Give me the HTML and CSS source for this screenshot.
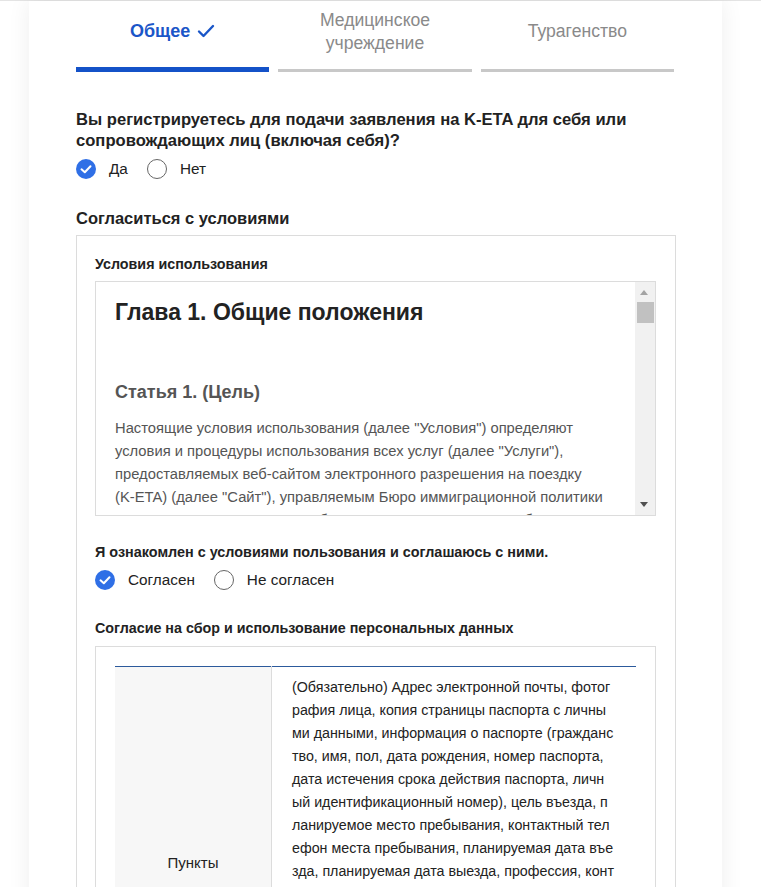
FILE: index.html
```html
<!DOCTYPE html>
<html lang="ru">
<head>
<meta charset="utf-8">
<title>K-ETA</title>
<link rel="stylesheet" href="styles.css">
</head>
<body>
<div class="topline"></div>
<main class="card">
  <nav class="tabs">
    <div class="tab active">
      <div class="tab-label">Общее
        <svg class="tab-check" width="18" height="14" viewBox="0 0 18 14"><polyline points="2,7.5 6.5,12 16,2" fill="none" stroke="#1a56c8" stroke-width="2.4" stroke-linecap="round" stroke-linejoin="round"/></svg>
      </div>
      <div class="tab-bar"></div>
    </div>
    <div class="tab">
      <div class="tab-label">Медицинское<br>учреждение</div>
      <div class="tab-bar"></div>
    </div>
    <div class="tab">
      <div class="tab-label">Турагенство</div>
      <div class="tab-bar"></div>
    </div>
  </nav>

  <section class="question">
    <h2 class="q-title">Вы регистрируетесь для подачи заявления на K-ETA для себя или сопровождающих лиц (включая себя)?</h2>
    <div class="radios">
      <label class="radio"><span class="dot checked"><svg width="20" height="20" viewBox="0 0 20 20"><polyline points="5.5,10.3 8.8,13.3 14.5,7.2" fill="none" stroke="#fff" stroke-width="2" stroke-linecap="round" stroke-linejoin="round"/></svg></span>Да</label>
      <label class="radio"><span class="dot"></span>Нет</label>
    </div>
  </section>

  <h2 class="section-title">Согласиться с условиями</h2>
  <div class="terms-box">
    <h3 class="sub-title">Условия использования</h3>
    <div class="scroll-wrap">
      <div class="scroll">
        <h4 class="chapter">Глава 1. Общие положения</h4>
        <h5 class="article">Статья 1. (Цель)</h5>
        <p class="para">Настоящие условия использования (далее "Условия") определяют условия и процедуры использования всех услуг (далее "Услуги"), предоставляемых веб-сайтом электронного разрешения на поездку <span class="nowrap">(K-ETA)</span> (далее "Сайт"), управляемым Бюро иммиграционной политики Министерства юстиции Республики Корея, а также права, обязанности и ответственность Сайта и пользователей.</p>
        <h5 class="article">Статья 2. (Определения)</h5>
        <p class="para">Термины, используемые в настоящих Условиях, определяются следующим образом. "Пользователь" означает лицо, которое получает доступ к Сайту и пользуется Услугами в соответствии с настоящими Условиями.</p>
        <h5 class="article">Статья 3. (Публикация и изменение Условий)</h5>
        <p class="para">Сайт размещает содержание настоящих Условий на начальном экране, чтобы пользователи могли легко с ними ознакомиться. Сайт может изменять настоящие Условия в пределах, не противоречащих действующему законодательству.</p>
      </div>
      <div class="scrollbar" aria-hidden="true">
        <span class="sb-arrow up"></span>
        <span class="sb-thumb"></span>
        <span class="sb-arrow down"></span>
      </div>
    </div>
    <p class="agree-q">Я ознакомлен с условиями пользования и соглашаюсь с ними.</p>
    <div class="radios">
      <label class="radio"><span class="dot checked"><svg width="20" height="20" viewBox="0 0 20 20"><polyline points="5.5,10.3 8.8,13.3 14.5,7.2" fill="none" stroke="#fff" stroke-width="2" stroke-linecap="round" stroke-linejoin="round"/></svg></span>Согласен</label>
      <label class="radio"><span class="dot"></span>Не согласен</label>
    </div>

    <h3 class="sub-title privacy">Согласие на сбор и использование персональных данных</h3>
    <div class="consent-box">
      <table class="consent-table">
        <tr>
          <th>Пункты</th>
          <td>(Обязательно) Адрес электронной почты, фотог<br>рафия лица, копия страницы паспорта с личны<br>ми данными, информация о паспорте (гражданс<br>тво, имя, пол, дата рождения, номер паспорта,<br>дата истечения срока действия паспорта, личн<br>ый идентификационный номер), цель въезда, п<br>ланируемое место пребывания, контактный тел<br>ефон места пребывания, планируемая дата въе<br>зда, планируемая дата выезда, профессия, конт<br>актные данные, опыт посещения Кореи, наличи<br>е двойного гражданства, сведения о семье, сведения о сопровождающих лицах, сведения о судимости, сведения о заболеваниях, сведения о предыдущих отказах во въезде в Республику Корея, сведения о посещении других стран, сведения о месте работы и занимаемой должности</td>
        </tr>
      </table>
    </div>
  </div>
</main>
</body>
</html>
```

FILE: styles.css
```css
html, body {
  margin: 0;
  padding: 0;
  background: #ffffff;
}

body {
  font-family: "Liberation Sans", Arial, sans-serif;
  color: #222;
}

.topline {
  height: 1px;
  background: #e4e4e4;
}

.card {
  width: 693px;
  margin: 0 39px 0 29px;
  padding: 0 46px 40px 47px;
  box-sizing: border-box;
  background: #fff;
  box-shadow: 0 0 22px rgba(0, 0, 0, 0.07);
  min-height: 1200px;
}

/* Tabs */
.tabs {
  display: flex;
  gap: 9px;
  width: 598px;
}

.tab {
  flex: 1;
  height: 71px;
  display: flex;
  flex-direction: column;
}

.tab-label {
  flex: 1;
  display: flex;
  align-items: center;
  justify-content: center;
  text-align: center;
  font-size: 17.6px;
  line-height: 23px;
  color: #8a8a8a;
  padding-bottom: 7px;
}

.tab.active .tab-label {
  color: #1a56c8;
  font-size: 18px;
  font-weight: bold;
  gap: 7px;
  padding-bottom: 5px;
}

.tab-check {
  display: block;
  margin-top: -1px;
}

.tab-bar {
  height: 3px;
  background: #c8c8c8;
}

.tab.active .tab-bar {
  height: 5px;
  background: #1452c8;
}

/* Question */
.question {
  margin-top: 37px;
}

.q-title {
  margin: 0;
  font-size: 16.6px;
  line-height: 21px;
  font-weight: bold;
  color: #222;
}

.radios {
  display: flex;
  align-items: center;
  gap: 19px;
  margin-top: 8px;
}

.radio {
  display: flex;
  align-items: center;
  gap: 13px;
  font-size: 15.3px;
  line-height: 20px;
  color: #222;
}

.dot {
  width: 20px;
  height: 20px;
  border-radius: 50%;
  border: 1px solid #666;
  box-sizing: border-box;
  display: flex;
  align-items: center;
  justify-content: center;
  background: #fff;
}

.dot.checked {
  border: none;
  background: #2f6fe6;
}

.dot svg {
  display: block;
}

.section-title {
  margin: 29px 0 0;
  font-size: 16.5px;
  line-height: 20px;
  font-weight: bold;
  color: #222;
}

/* Terms box */
.terms-box {
  margin-top: 7px;
  border: 1px solid #dcdcdc;
  border-bottom: none;
  padding: 19px 19px 0 18px;
}

.sub-title {
  margin: 0;
  font-size: 14.3px;
  line-height: 18px;
  font-weight: bold;
  color: #222;
}

.scroll-wrap {
  position: relative;
  margin-top: 8px;
  height: 235px;
  box-sizing: border-box;
  border: 1px solid #dcdcdc;
}

.scroll {
  height: 100%;
  box-sizing: border-box;
  overflow: hidden;
  padding: 17px 42px 0 19px;
}

.nowrap {
  white-space: nowrap;
}

.scrollbar {
  position: absolute;
  top: 0;
  right: 0;
  bottom: 0;
  width: 20px;
  background: #f1f1f1;
}

.sb-thumb {
  position: absolute;
  top: 20px;
  left: 2px;
  width: 17px;
  height: 21px;
  background: #c1c1c1;
}

.sb-arrow {
  position: absolute;
  left: 5px;
  width: 0;
  height: 0;
  border-left: 4.5px solid transparent;
  border-right: 4.5px solid transparent;
}

.sb-arrow.up {
  top: 8px;
  border-bottom: 5px solid #a3a3a3;
}

.sb-arrow.down {
  bottom: 8px;
  border-top: 5px solid #505050;
}

.chapter {
  margin: 0;
  font-size: 23px;
  line-height: 26px;
  font-weight: bold;
  color: #222;
}

.article {
  margin: 55px 0 0;
  font-size: 18px;
  line-height: 24px;
  font-weight: bold;
  color: #555;
}

.para {
  margin: 13px 0 0;
  font-size: 14.75px;
  line-height: 23px;
  color: #555;
}

.agree-q {
  margin: 26px 0 0;
  font-size: 14.4px;
  line-height: 20px;
  font-weight: bold;
  color: #222;
}

.sub-title.privacy {
  margin-top: 28px;
  font-size: 14.3px;
  line-height: 20px;
}

.consent-box {
  margin-top: 8px;
  border: 1px solid #dcdcdc;
  border-bottom: none;
  padding: 19px 19px 0 19px;
}

.consent-table {
  width: 100%;
  border-collapse: collapse;
  border-top: 1px solid #2c5a9c;
}

.consent-table th {
  width: 156px;
  background: #f7f7f7;
  font-weight: normal;
  font-size: 15px;
  color: #222;
  text-align: center;
  vertical-align: middle;
  border-right: 1px solid #dcdcdc;
  padding: 0;
}

.consent-table td {
  padding: 9px 12px 14px 20px;
  font-size: 14.25px;
  line-height: 23px;
  color: #222;
  word-break: break-all;
  vertical-align: top;
}
```
